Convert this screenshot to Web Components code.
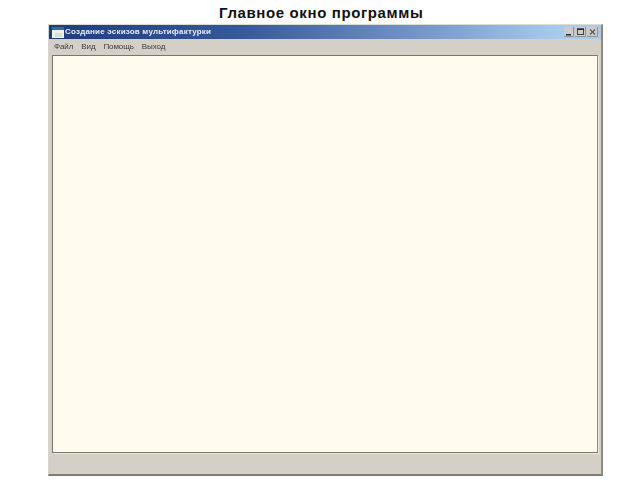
<!DOCTYPE html>
<html>
<head>
<meta charset="utf-8">
<style>
	html, body { margin: 0; background: #fff; }
	body { width: 640px; height: 480px; overflow: hidden; font-family: "Liberation Sans", sans-serif; }
</style>
</head>
<body>
<slide-page heading="Главное окно программы">
	<app-window caption="Создание эскизов мультифактурки">
		<menu-item>Файл</menu-item>
		<menu-item>Вид</menu-item>
		<menu-item>Помощь</menu-item>
		<menu-item>Выход</menu-item>
	</app-window>
</slide-page>
<script>
"use strict";

(function() {
	class SlidePage extends HTMLElement {
		constructor() {
			super();
			this.attachShadow({mode: "open"}).innerHTML = `
			<style>
				:host { display: flex; flex-direction: column; align-items: flex-start; width: 640px; height: 480px; }
				h1 {
					align-self: stretch;
					margin: 0;
					padding-left: 219px;
					height: 24px;
					font: bold 15px/26px "Liberation Sans", sans-serif;
					letter-spacing: 0.62px;
					color: #111;
					white-space: nowrap;
				}
				.body { padding-left: 48px; }
			</style>
			<h1></h1>
			<div class="body"><slot></slot></div>
			`;
			this.shadowRoot.querySelector("h1").textContent = this.getAttribute("heading");
		}
	}

	class AppWindow extends HTMLElement {
		constructor() {
			super();
			this.attachShadow({mode: "open"}).innerHTML = `
			<style>
				:host {
					display: flex;
					flex-direction: column;
					box-sizing: border-box;
					width: 555px;
					height: 452px;
					background: #d4d0c8;
					border-top: 1px solid #dedbd4;
					border-left: 1px solid #d8d5ce;
					border-right: 2px solid #8c8a85;
					border-bottom: 2px solid #7e7d79;
				}
				.title {
					display: flex;
					align-items: center;
					height: 14px;
					flex: none;
					padding-left: 3px;
					background: linear-gradient(to right, #1f3c7c 0, #35599a 35%, #7a9bce 70%, #a8cbec 92%, #a8cbec 100%);
				}
				.title svg.app { flex: none; margin-right: 1px; }
				.caption {
					flex: 1;
					font: bold 8px/14px "Liberation Sans", sans-serif;
					letter-spacing: 0.2px;
					color: #e8edf5;
					white-space: nowrap;
					filter: blur(0.3px);
				}
				.buttons { display: flex; gap: 1px; padding-right: 3px; }
				.buttons svg { display: block; }
				.menu {
					display: flex;
					align-items: center;
					flex: none;
					height: 15px;
					padding-left: 5px;
					gap: 8px;
					filter: blur(0.3px);
				}
				.canvas {
					flex: 1;
					margin: 1px 3px 0 3px;
					background: #fffbee;
					border: 1px solid #77766f;
					border-right-color: #8a8983;
					box-shadow: 1px 1px 0 #ece9e2;
				}
				.status { flex: none; height: 21px; }
			</style>
			<div class="title">
				<svg class="app" width="12" height="11" viewBox="0 0 12 11">
					<rect x="0" y="0" width="12" height="11" fill="#eef4ec"/>
					<rect x="0" y="0" width="12" height="3" fill="#2f6f96"/>
					<rect x="3" y="6" width="7" height="4" fill="#cfe3d6"/>
				</svg>
				<div class="caption"></div>
				<div class="buttons">
					<svg width="10" height="10" viewBox="0 0 10 10">
						<rect width="10" height="10" fill="#cdccc8"/>
						<path d="M0 9.5H9.5V0" fill="none" stroke="#92918c"/>
						<rect x="2" y="7" width="5" height="1.5" fill="#2a2a2a"/>
					</svg>
					<svg width="11" height="10" viewBox="0 0 11 10">
						<rect width="11" height="10" fill="#cdccc8"/>
						<path d="M0 9.5H10.5V0" fill="none" stroke="#92918c"/>
						<rect x="2.5" y="2" width="6" height="5.5" fill="none" stroke="#444"/>
						<rect x="2" y="1.5" width="7" height="1.5" fill="#2a2a2a"/>
					</svg>
					<svg width="11" height="10" viewBox="0 0 11 10">
						<rect width="11" height="10" fill="#cdccc8"/>
						<path d="M0 9.5H10.5V0" fill="none" stroke="#92918c"/>
						<path d="M3 2.5L8 7.5M8 2.5L3 7.5" stroke="#555" stroke-width="1.1"/>
					</svg>
				</div>
			</div>
			<div class="menu"><slot></slot></div>
			<div class="canvas"></div>
			<div class="status"></div>
			`;
			this.shadowRoot.querySelector(".caption").textContent = this.getAttribute("caption");
		}
	}

	class MenuItem extends HTMLElement {
		constructor() {
			super();
			this.attachShadow({mode: "open"}).innerHTML = `
			<style>
				:host { display: block; font: 8px/12px "Liberation Sans", sans-serif; letter-spacing: -0.1px; color: #3c3c3a; white-space: nowrap; }
			</style>
			<slot></slot>
			`;
		}
	}

	customElements.define("slide-page", SlidePage);
	customElements.define("app-window", AppWindow);
	customElements.define("menu-item", MenuItem);
})();
</script>
</body>
</html>
